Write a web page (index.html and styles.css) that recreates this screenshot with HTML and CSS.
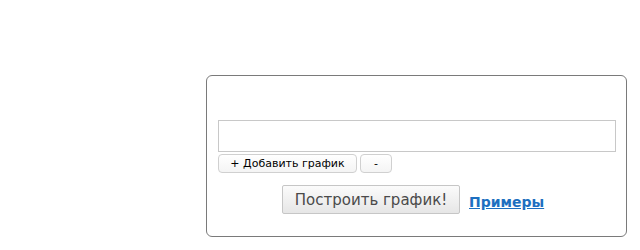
FILE: index.html
```html
<!DOCTYPE html>
<html lang="ru">

<head>
    <meta charset="UTF-8">
    <title>Построить график</title>
    <link rel="stylesheet" href="styles.css">
</head>

<body>
    <div id="plot">
        <input type="text" id="func" value="">
        <div id="tools">
            <button class="small add">+ Добавить график</button>
            <button class="small minus">-</button>
        </div>
        <div id="go">
            <button class="big">Построить график!</button>
            <a href="#" class="examples">Примеры</a>
        </div>
    </div>
</body>

</html>
```
FILE: styles.css
```css
* {
    padding: 0;
    margin: 0;
    box-sizing: border-box;
}

body {
    font-family: "DejaVu Sans", Verdana, sans-serif;
    background: #fff;
}

#plot {
    width: 421px;
    height: 162px;
    margin: 75px 0 0 206px;
    padding: 44px 11px 0 11px;
    border: 1px solid #7a7a7a;
    border-radius: 6px;
}

#func {
    display: block;
    width: 398px;
    height: 32px;
    border: 1px solid #c8c8c8;
    outline: none;
    background: #fff;
}

#tools {
    display: flex;
    gap: 3px;
    margin-top: 2px;
}

.small {
    height: 19px;
    border: 1px solid #d0d0d0;
    border-radius: 4px;
    background: linear-gradient(#fff, #f4f4f4);
    font-family: "DejaVu Sans", Verdana, sans-serif;
    font-size: 11px;
    color: #000;
}

.add {
    width: 139px;
}

.minus {
    width: 32px;
}

#go {
    display: flex;
    align-items: center;
    margin: 12px 0 0 64px;
    gap: 9px;
}

.big {
    width: 178px;
    height: 29px;
    border: 1px solid #c6c6c6;
    border-radius: 2px;
    background: linear-gradient(#fbfbfb, #e6e6e6);
    font-family: "DejaVu Sans", Verdana, sans-serif;
    font-size: 15px;
    color: #4a4a4a;
}

.examples {
    font-size: 14px;
    font-weight: bold;
    color: #1d6fc0;
    text-decoration: underline;
    margin-top: 4px;
}
```
